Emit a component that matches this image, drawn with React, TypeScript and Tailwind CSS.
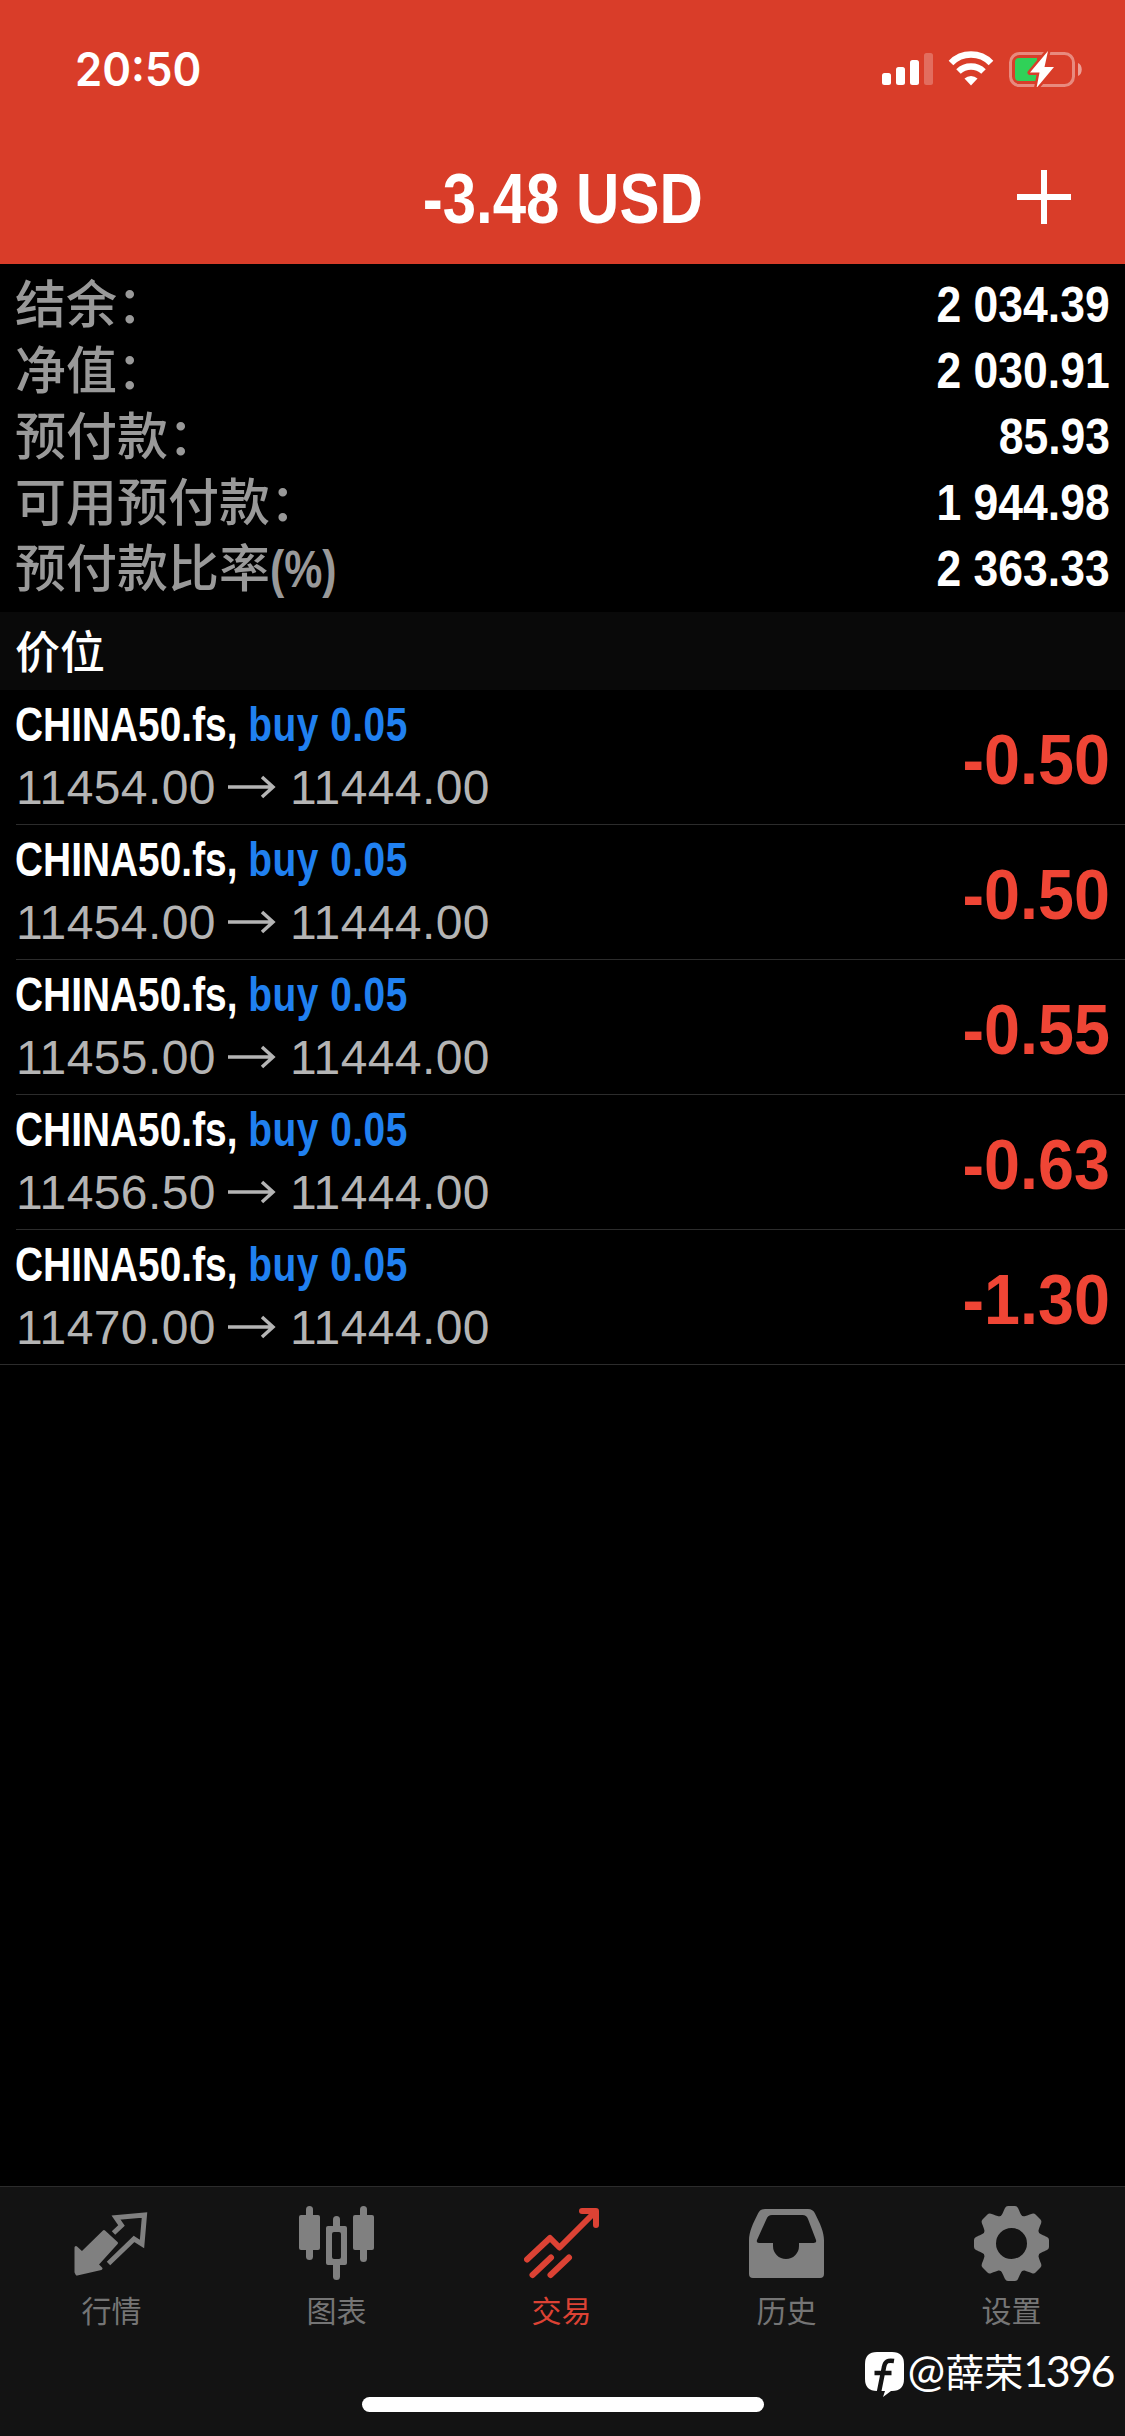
import type { ReactNode } from 'react';

interface Position {
  id: number;
  open: string;
  current: string;
  profit: string;
}

const summary = [
  { label: '结余：', value: '2 034.39' },
  { label: '净值：', value: '2 030.91' },
  { label: '预付款：', value: '85.93' },
  { label: '可用预付款：', value: '1 944.98' },
  { label: '预付款比率', unit: '(%)', value: '2 363.33' },
];

const positions: Position[] = [
  { id: 1, open: '11454.00', current: '11444.00', profit: '-0.50' },
  { id: 2, open: '11454.00', current: '11444.00', profit: '-0.50' },
  { id: 3, open: '11455.00', current: '11444.00', profit: '-0.55' },
  { id: 4, open: '11456.50', current: '11444.00', profit: '-0.63' },
  { id: 5, open: '11470.00', current: '11444.00', profit: '-1.30' },
];

const QuotesIcon = () => (
  <svg viewBox="0 0 75 75" className="size-[75px]">
    <path
      d="M2 41.500L8 47 30 25.500 42.500 37 23 58.500 27 62.500 3 68 2 66z"
      fill="currentColor"
      stroke="currentColor"
      strokeWidth="3"
      strokeLinejoin="round"
    />
    <path
      d="M39.500 27L47.500 19.500 42 11.500 70.500 9 68 38 60 33 34.500 57.500"
      fill="none"
      stroke="currentColor"
      strokeWidth="5"
    />
  </svg>
);

const ChartIcon = () => (
  <svg viewBox="0 0 75 75" className="size-[75px]" fill="currentColor">
    <rect x="7" y="0" width="7" height="54" rx="3.500" />
    <rect x="0" y="9" width="21" height="35" rx="2" />
    <rect x="34" y="10" width="7" height="15" rx="3.500" />
    <rect x="34" y="55" width="7" height="19" rx="3.500" />
    <path
      fillRule="evenodd"
      d="M29 20h17a2 2 0 0 1 2 2v35a2 2 0 0 1-2 2H29a2 2 0 0 1-2-2V22a2 2 0 0 1 2-2zm6 6a2 2 0 0 0-2 2v23a2 2 0 0 0 2 2h5a2 2 0 0 0 2-2V28a2 2 0 0 0-2-2z"
    />
    <rect x="61" y="0" width="7" height="56" rx="3.500" />
    <rect x="54" y="9" width="21" height="35" rx="2" />
  </svg>
);

const TradeIcon = () => (
  <svg
    viewBox="0 0 75 75"
    className="size-[75px]"
    fill="none"
    stroke="currentColor"
    strokeWidth="6"
    strokeLinecap="round"
    strokeLinejoin="round"
  >
    <path d="M3 53.500L26 32l9.500 9.500L71 6" />
    <path d="M58 5h14v14" />
    <path d="M8.500 69l18.500-17.500M26.500 69L45 51.500" />
  </svg>
);

const HistoryIcon = () => (
  <svg viewBox="0 0 75 75" className="size-[75px]" fill="currentColor" fillRule="evenodd">
    <path d="M16 3h43q5 0 7 4.500c5 10 9 18 9 27V68q0 4-4 4H4q-4 0-4-4V34.500c0-9 4-17 9-27Q11 3 16 3zm7 6q-4 0-5.500 4L8 34q-1 3 2 3h14v3a13 13 0 0 0 26 0v-3h14.500q3.500 0 2.500-3l-8-21q-1.500-4-5.500-4z" />
  </svg>
);

const SettingsIcon = () => (
  <svg viewBox="0 0 75 75" className="size-[75px]">
    <circle cx="37.500" cy="37.500" r="22.500" fill="none" stroke="currentColor" strokeWidth="14" />
    {[0, 45, 90, 135, 180, 225, 270, 315].map((angle) => (
      <path
        key={angle}
        d="M25 12c3-2 4.500-7 6-10q1-2 3-2h7q2 0 3 2c1.500 3 3 8 6 10z"
        fill="currentColor"
        transform={`rotate(${angle} 37.5 37.5)`}
      />
    ))}
  </svg>
);

const tabs: { label: string; icon: ReactNode; active?: boolean }[] = [
  { label: '行情', icon: <QuotesIcon /> },
  { label: '图表', icon: <ChartIcon /> },
  { label: '交易', icon: <TradeIcon />, active: true },
  { label: '历史', icon: <HistoryIcon /> },
  { label: '设置', icon: <SettingsIcon /> },
];

const StatusBar = () => (
  <div className="flex h-[132px] items-start justify-between pt-[46px] pr-[42px] pl-[75px]">
    <span className="origin-left scale-x-[0.95] font-['Inter',sans-serif] text-[46px] leading-[46px] font-semibold">
      20:50
    </span>
    <div className="flex items-center pt-[5px]">
      <svg viewBox="0 0 52 36" className="h-9 w-[52px]" fill="#fff">
        <rect x="0" y="22" width="9" height="12" rx="2.500" />
        <rect x="14" y="16" width="9" height="18" rx="2.500" />
        <rect x="28" y="9" width="9" height="25" rx="2.500" />
        <rect x="42" y="2" width="9" height="32" rx="2.500" opacity="0.25" />
      </svg>
      <svg viewBox="0 0 46 36" className="ml-[14px] h-9 w-[46px]" fill="none" stroke="#fff" strokeWidth="6.500">
        <path d="M3 12a28 28 0 0 1 40 0" />
        <path d="M10.500 20.500a18 18 0 0 1 25 0" />
        <path d="M16.500 27.500a9.500 9.500 0 0 1 13 0L23 34.500z" fill="#fff" stroke="none" />
      </svg>
      <svg viewBox="0 0 74 36" className="ml-[15px] h-9 w-[74px]">
        <rect x="1.500" y="2.500" width="63" height="32" rx="9" fill="none" stroke="#fff" strokeOpacity="0.400" strokeWidth="3" />
        <path d="M69 12c5 2 5 11 0 13z" fill="#fff" fillOpacity="0.500" />
        <path d="M10 7h18v23H10q-4 0-4-4V11q0-4 4-4z" fill="#30d158" />
        <path
          d="M39 0L21 21.500h9.500L27.500 37 45 16h-9.500z"
          fill="#fff"
          stroke="#d93d29"
          strokeWidth="5"
          strokeLinejoin="round"
          paintOrder="stroke"
        />
      </svg>
    </div>
  </div>
);

const PositionRow = ({ position, last }: { position: Position; last: boolean }) => (
  <div className={last ? 'border-b border-[#2c2c2c]' : 'ml-4 border-b border-[#2c2c2c]'}>
    <div className={`flex h-[134px] items-center justify-between pr-[15px] ${last ? 'pl-4' : ''}`}>
      <div className="-mt-0.5">
        <div className="-ml-px w-max origin-left scale-x-[0.81] text-5xl leading-[63px] font-bold whitespace-pre text-white">
          CHINA50.fs, <span className="tracking-[0.6px] text-[#2080f0]">buy 0.05</span>
        </div>
        <div className="flex items-center text-5xl leading-[63px] tracking-[0.4px] text-[#b4b4b4]">
          <span className="w-[212px]">{position.open}</span>
          <svg viewBox="0 0 48 24" className="mb-0.5 w-12" fill="none" stroke="currentColor" strokeWidth="3.500">
            <path d="M0 12h45M34 2l11 10-11 10" />
          </svg>
          <span className="ml-[14px]">{position.current}</span>
        </div>
      </div>
      <span className="origin-right scale-x-[0.91] pt-1.5 text-[71px] leading-[80px] font-bold text-[#ef4535]">
        {position.profit}
      </span>
    </div>
  </div>
);

export default function App() {
  return (
    <div className="flex h-[2436px] w-[1125px] flex-col overflow-hidden bg-black font-['Liberation_Sans','Noto_Sans_CJK_SC',sans-serif] text-white">
      <header className="h-[264px] bg-[#d93d29]">
        <StatusBar />
        <div className="grid h-[132px] grid-cols-[1fr_auto_1fr] items-center">
          <div />
          <h1 className="scale-x-[0.845] pt-[1px] text-[71px] leading-[131px] font-bold">-3.48 USD</h1>
          <button className="mr-[54px] mb-[2px] justify-self-end">
            <svg viewBox="0 0 54 54" className="size-[54px]" stroke="#fff" strokeWidth="6">
              <path d="M27 0v54M0 27h54" />
            </svg>
          </button>
        </div>
      </header>

      <section className="px-[15px] pt-[4px] pb-[14px]">
        {summary.map((row) => (
          <div key={row.label} className="flex h-[66px] items-start justify-between">
            <span className="font-['Noto_Sans_CJK_SC',sans-serif] text-[51px] leading-[66px] font-medium text-[#999]">
              {row.label}
              {row.unit && (
                <span className="inline-block origin-left scale-x-[0.84] font-['Liberation_Sans',sans-serif] font-bold">
                  {row.unit}
                </span>
              )}
            </span>
            <span className="origin-right scale-x-[0.89] pt-[4px] text-[50px] leading-[66px] font-bold">{row.value}</span>
          </div>
        ))}
      </section>

      <div className="h-[78px] bg-[#090909] pl-[15px] font-['Noto_Sans_CJK_SC',sans-serif] text-[45px] leading-[75px] font-medium">
        价位
      </div>

      <main className="flex-1">
        {positions.map((position, index) => (
          <PositionRow key={position.id} position={position} last={index === positions.length - 1} />
        ))}
      </main>

      <footer className="relative h-[250px] border-t border-[#2c2c2c] bg-[#131313]">
        <nav className="grid grid-cols-5 pt-[19px]">
          {tabs.map((tab) => (
            <div
              key={tab.label}
              className={`flex flex-col items-center pr-0.5 ${tab.active ? 'text-[#dc4234]' : 'text-[#808080]'}`}
            >
              {tab.icon}
              <span
                className={`mt-[8px] font-['Noto_Sans_CJK_SC',sans-serif] text-[30px] leading-[40px] ${tab.active ? '' : 'text-[#757575]'}`}
              >
                {tab.label}
              </span>
            </div>
          ))}
        </nav>

        {/* Watermark */}
        <div className="absolute top-[158px] right-[12px] flex items-center">
          <svg viewBox="0 0 39 45" className="mt-1.5 h-[45px] w-[39px]">
            <path d="M12 0h15q12 0 12 12v15q0 12-12 12h-1L18 45l2-6h-8Q0 39 0 27V12Q0 0 12 0z" fill="#fff" />
            <path d="M29 9c-6-1-9 0-10 6l-5 25M9.500 21h17" fill="none" stroke="#131313" strokeWidth="4.500" />
          </svg>
          <span className="ml-1 flex items-baseline font-['Lato','Noto_Sans_CJK_SC',sans-serif] text-[39px] leading-[50px]">
            <span className="text-[45px]">@</span>
            薛荣
            <span className="text-[43px] tracking-[-2.500px]">1396</span>
          </span>
        </div>

        {/* Home indicator */}
        <div className="absolute bottom-6 left-[362px] h-[15px] w-[402px] rounded-full bg-white" />
      </footer>
    </div>
  );
}
